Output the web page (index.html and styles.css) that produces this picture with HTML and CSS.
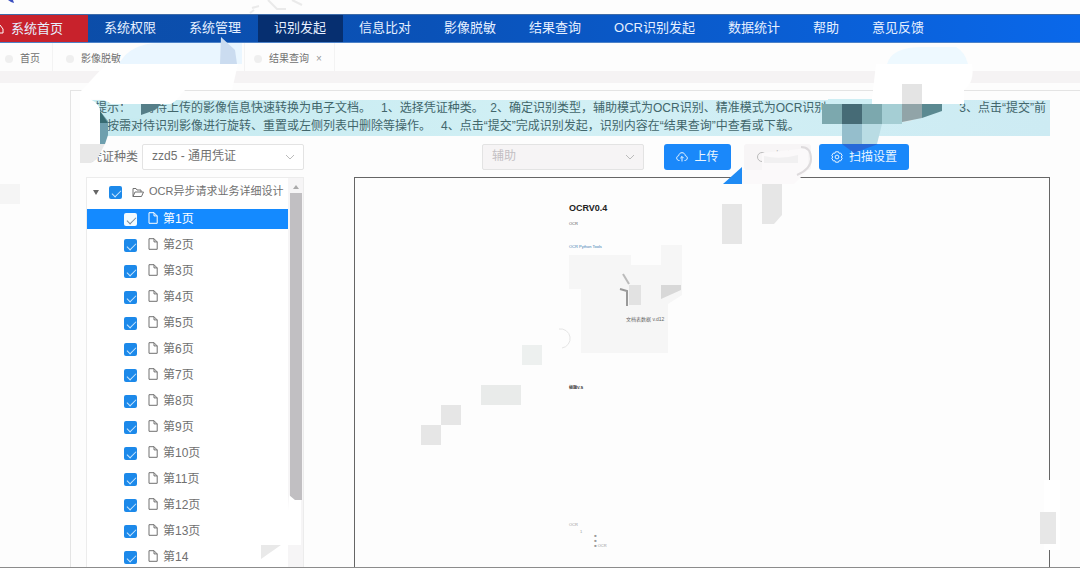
FILE: index.html
```html
<!DOCTYPE html>
<html lang="zh-CN">
<head>
<meta charset="utf-8">
<title>识别发起</title>
<link rel="stylesheet" href="styles.css">
</head>
<body>
<svg class="defs" width="0" height="0" aria-hidden="true">
  <symbol id="file" viewBox="0 0 10 12"><path d="M1 .7h5l3.2 3.2v7.4H1zM6 .7v3.2h3.2" fill="none" stroke="currentColor"/></symbol>
  <symbol id="chevron" viewBox="0 0 10 10"><path d="M1 3l4 4 4-4" fill="none" stroke="currentColor"/></symbol>
</svg>
<div class="page">
  <header class="brand">
    <svg class="brand-mark" width="16" height="4" viewBox="0 0 16 4"><path d="M8 0h5l1 3-3-1z" fill="#3b4fc0"/></svg>
  </header>
  <nav class="nav">
    <a class="nav-item home" href="#"><svg class="home-icon" width="5" height="12" viewBox="0 0 5 12"><path d="M0 2l3 4v4H0" fill="none" stroke="#fff"/></svg>系统首页</a>
    <a class="nav-item" href="#">系统权限</a>
    <a class="nav-item" href="#">系统管理</a>
    <a class="nav-item active" href="#">识别发起</a>
    <a class="nav-item" href="#">信息比对</a>
    <a class="nav-item" href="#">影像脱敏</a>
    <a class="nav-item" href="#">结果查询</a>
    <a class="nav-item" href="#">OCR识别发起</a>
    <a class="nav-item" href="#">数据统计</a>
    <a class="nav-item" href="#">帮助</a>
    <a class="nav-item" href="#">意见反馈</a>
  </nav>
  <div class="tabs">
    <a class="tab first" href="#"><i class="dot"></i>首页</a>
    <a class="tab wide" href="#"><i class="dot"></i>影像脱敏</a>
    <a class="tab" href="#"><i class="dot"></i>结果查询<span class="close">×</span></a>
  </div>
  <div class="band"></div>
  <main class="content">
    <div class="tip">
      <p class="tip-line">提示：可将待上传的影像信息快速转换为电子文档。   1、选择凭证种类。  2、确定识别类型，辅助模式为OCR识别、精准模式为OCR识别<span class="tip-end">3、点击“提交”前</span></p>
      <p class="tip-line">可按需对待识别影像进行旋转、重置或左侧列表中删除等操作。   4、点击“提交”完成识别发起，识别内容在“结果查询”中查看或下载。</p>
    </div>
    <form class="toolbar">
      <label class="label" for="kind">凭证种类</label>
      <span class="select"><select id="kind"><option>zzd5 - 通用凭证</option></select><svg class="arrow" width="10" height="10"><use href="#chevron"/></svg></span>
      <span class="select mode"><select aria-label="识别模式" disabled><option>辅助</option></select><svg class="arrow" width="10" height="10"><use href="#chevron"/></svg></span>
      <button class="btn upload" type="button"><svg width="12" height="12" viewBox="0 0 12 12" fill="none" stroke="currentColor"><path d="M3.5 9.5C1.500 9.500.7 8.300.7 7c0-1.200.9-2.200 2-2.300C3 2.700 4.300 1.700 6 1.700s3 1 3.300 3c1.100.1 2 1.100 2 2.300 0 1.300-.8 2.500-2.800 2.500M6 10.500V5.500M4.300 7.200L6 5.500l1.700 1.700"/></svg><span class="btn-text">上传</span></button>
      <button class="btn ghost" type="button" disabled><svg width="12" height="12" viewBox="0 0 12 12" fill="none" stroke="currentColor"><circle cx="6" cy="6" r="4.500"/></svg><span class="btn-text">扫描</span></button>
      <button class="btn setting" type="button"><svg width="12" height="12" viewBox="0 0 12 12" fill="none" stroke="currentColor"><path d="M4.500.8h3l.6 1.500 1.600-.2 1.500 2.600-1 1.300 1 1.300-1.500 2.600-1.600-.2-.6 1.500h-3l-.6-1.500-1.600.2L.8 7.300 1.800 6l-1-1.300 1.500-2.600 1.600.2z"/><circle cx="6" cy="6" r="1.900"/></svg><span class="btn-text">扫描设置</span></button>
    </form>
    <div class="work">
      <aside class="tree">
        <div class="tree-list">
          <div class="root"><span class="caret"></span><input class="check" type="checkbox" id="r" checked><svg width="12" height="11" viewBox="0 0 12 11" fill="none" stroke="currentColor"><path d="M1 9.500v-8h3l1 1.500h4v2M1 9.500L3 5h8.500L9.500 9.500z"/></svg><label for="r">OCR异步请求业务详细设计</label></div>
          <div class="node selected"><input class="check" type="checkbox" id="p1" checked><svg width="10" height="12"><use href="#file"/></svg><label for="p1">第1页</label></div>
          <div class="node"><input class="check" type="checkbox" id="p2" checked><svg width="10" height="12"><use href="#file"/></svg><label for="p2">第2页</label></div>
          <div class="node"><input class="check" type="checkbox" id="p3" checked><svg width="10" height="12"><use href="#file"/></svg><label for="p3">第3页</label></div>
          <div class="node"><input class="check" type="checkbox" id="p4" checked><svg width="10" height="12"><use href="#file"/></svg><label for="p4">第4页</label></div>
          <div class="node"><input class="check" type="checkbox" id="p5" checked><svg width="10" height="12"><use href="#file"/></svg><label for="p5">第5页</label></div>
          <div class="node"><input class="check" type="checkbox" id="p6" checked><svg width="10" height="12"><use href="#file"/></svg><label for="p6">第6页</label></div>
          <div class="node"><input class="check" type="checkbox" id="p7" checked><svg width="10" height="12"><use href="#file"/></svg><label for="p7">第7页</label></div>
          <div class="node"><input class="check" type="checkbox" id="p8" checked><svg width="10" height="12"><use href="#file"/></svg><label for="p8">第8页</label></div>
          <div class="node"><input class="check" type="checkbox" id="p9" checked><svg width="10" height="12"><use href="#file"/></svg><label for="p9">第9页</label></div>
          <div class="node"><input class="check" type="checkbox" id="p10" checked><svg width="10" height="12"><use href="#file"/></svg><label for="p10">第10页</label></div>
          <div class="node"><input class="check" type="checkbox" id="p11" checked><svg width="10" height="12"><use href="#file"/></svg><label for="p11">第11页</label></div>
          <div class="node"><input class="check" type="checkbox" id="p12" checked><svg width="10" height="12"><use href="#file"/></svg><label for="p12">第12页</label></div>
          <div class="node"><input class="check" type="checkbox" id="p13" checked><svg width="10" height="12"><use href="#file"/></svg><label for="p13">第13页</label></div>
          <div class="node"><input class="check" type="checkbox" id="p14" checked><svg width="10" height="12"><use href="#file"/></svg><label for="p14">第14</label></div>
        </div>
        <div class="scroll"><span class="scroll-up"></span><span class="thumb"></span></div>
      </aside>
      <article class="doc">
        <h1 class="doc-title">OCRV0.4</h1>
        <p class="doc-small">OCR</p>
        <p class="doc-link">OCR Python Tools</p>
        <svg class="figure" width="113" height="98" viewBox="0 0 113 98">
          <path d="M0 0h62v10h30v-10h21v40l-14 9v49H12V34H0z" fill="#f6f6f6"/>
          <path d="M92-10h21V2H92z" fill="#f6f6f6"/>
          <path d="M60 30h12v20H60z" fill="#e2e2e2"/><path d="M92 30h20v5l-20 9z" fill="#d8d8d8"/>
          <path d="M54 19l6 10" stroke="#bbb" stroke-width="2" fill="none"/><path d="M51 34l7 2v15" stroke="#999" stroke-width="2" fill="none"/>
          <path d="M-10 74A9 9 0 1 1-7 93" stroke="#e5e5e5" fill="none"/>
          <text class="figure-text" x="57" y="66">文档表数据 v.d12</text>
        </svg>
        <p class="doc-head">标题V.S</p>
        <p class="doc-foot">OCR</p>
        <div class="doc-list"><span>1</span><ul><li>■</li><li>■</li><li>■ OCR</li></ul></div>
      </article>
    </div>
  </main>
  <svg class="marks" width="1080" height="568" viewBox="0 0 1080 568" aria-hidden="true">
    <path d="M250 13l4-3M252 8l7-2M268 0l9 9 9 0M292 0l10 5" stroke="#dedede" stroke-width="2" fill="none" opacity=".6"/>
    <path d="M119 64Q130 43 160 43H242V64z" fill="#eaf6ff"/><path d="M221 37l14 13 2 14h-17z" fill="#cbdcf0"/>
    <path d="M106 64H238L232 90H185Q174 104 170 104H111Q104 99 98 99H80V92z" fill="#fff"/>
    <path d="M123 104h18v14h-18z" fill="#c8ebf1"/><path d="M141 104h20l-6 6-14 5z" fill="#557e88"/>
    <path d="M80 99h10q10 5 10 12v35H80z" fill="#fff"/><path d="M100 111l8 10v14l-3 9h-5z" fill="#6e9fae"/><path d="M100 111l8 12h-8z" fill="#376b72"/>
    <path d="M80 144h25l-8 15-6 4H80z" fill="#e8e8e8"/><path d="M0 184h20v20H0z" fill="#f5f5f5"/>
    <path d="M887 64q5-17 35-17h34q9 5 12 17z" fill="#eef9ff"/><path d="M876 64h96q3 18-8 26v14H828l4-5H872z" fill="#fff"/>
    <path d="M828 99h44v5h-44z" fill="#ceeef4"/>
    <path d="M822 104h60v20h-60z" fill="#7ca8ae"/><path d="M842 104h20v20h-20z" fill="#466b76"/><path d="M842 124h20v20h-20z" fill="#95becc"/><path d="M862 124h20l-5 20h-15z" fill="#b9dce4"/>
    <path d="M882 104h20v20h-20z" fill="#a5ced4"/><path d="M902 84h20v32l-12 5-8 1z" fill="#e4e4e4"/><path d="M902 104h20v14l-20 4z" fill="#91a4a8"/><path d="M922 104h20v7l-20 7z" fill="#5b8991"/>
    <path d="M842 144h36l-24 9z" fill="#2769d8"/>
    <path d="M742 167v17h-19z" fill="#1f8bf4"/><path d="M742 170h20V153l46-5v22l-14 14h-52z" fill="#fbf9fa"/><path d="M764 156q16 4 34-1v8h-34z" fill="#f1f0f1"/><path d="M801 147q10 0 10 12 0 10-14 16" stroke="#dedbdd" stroke-width="2" fill="none"/>
    <path d="M762 184h20v31l-8 9h-12zM722 204h20v40h-20z" fill="#e6e6e6"/>
    <path d="M522 345h20v20h-20z" fill="#edf0ef"/><path d="M481 385h40v20h-40z" fill="#e9ebea"/><path d="M441 405h20v20h-20zM421 425h20v20h-20z" fill="#e6e6e6"/>
    <path d="M289 495l6 5h6v45h-15z" fill="#fff"/><path d="M261 545h20l-20 14z" fill="#e9e9e9"/>
    <path d="M1044 480h16v70h-16z" fill="#fff"/><path d="M1040 512h16v32h-16z" fill="#e7e7e7"/>
  </svg>
</div>
</body>
</html>
```
FILE: styles.css
```css
* { box-sizing: border-box; }
body, p, h1, ul { margin: 0; padding: 0; }
body {
  font-family: "Liberation Sans", "Noto Sans CJK SC", sans-serif;
  font-size: 12px;
  color: #707070;
  background: #fdfdfd;
}
a { color: inherit; text-decoration: none; }
ul { list-style: none; }
.defs { position: absolute; }
.page {
  position: relative;
  display: flex;
  flex-direction: column;
  height: 100vh;
  overflow: hidden;
  border-bottom: 1px solid #8c8c8c;
}
.brand { flex: 0 0 14px; }
.brand-mark { display: block; }
.nav {
  display: flex;
  flex: 0 0 29px;
  border-top: 1px solid #3f6ca8;
  border-bottom: 1px solid #4d82c8;
  background: linear-gradient(90deg, #0c4ca5, #0a52b8 40%, #0a68ea);
  color: #e6f0ff;
  font-size: 13px;
  line-height: 26px;
  white-space: nowrap;
}
.nav-item { padding: 0 17px 0 16px; }
.home {
  display: flex;
  align-items: center;
  padding: 0 25px 0 0;
  background: #c8222c;
}
.home-icon { margin-right: 6px; }
.active { background: #062f70; }
.tabs {
  display: flex;
  flex: 0 0 27px;
  align-items: center;
  font-size: 10px;
  line-height: 24px;
}
.tab {
  display: flex;
  align-items: center;
  padding: 4px 12px 0 9px;
  border-right: 1px solid #f3f3f3;
}
.first { padding-left: 5px; }
.wide { width: 192px; padding-left: 13px; }
.dot {
  width: 8px;
  height: 8px;
  margin-right: 7px;
  border-radius: 4px;
  background: #efefef;
}
.close { margin-left: 7px; color: #999; }
.band { flex: 0 0 12px; background: #f5f3f4; }
.content {
  display: flex;
  flex: 1;
  flex-direction: column;
  min-height: 0;
  margin: 7px 0 0 70px;
  padding: 9px 30px 0 15px;
  border-top: 1px solid #e4e4e4;
  border-left: 1px solid #e4e4e4;
}
.tip {
  padding: 0 4px 0 9px;
  background: linear-gradient(90deg, #c5eaf0, #d2f0f5 50%, #cdebf3);
  color: #42666b;
  white-space: nowrap;
}
.tip-line { display: flex; height: 18px; line-height: 17px; white-space: pre; }
.tip-end { margin-left: auto; }
.toolbar { display: flex; align-items: center; height: 26px; margin-top: 8px; }
.label { width: 52px; margin-left: 4px; padding-bottom: 3px; }
.select { position: relative; flex: 0 0 162px; color: #707070; }
.select select {
  width: 100%;
  height: 26px;
  padding: 0 9px 3px;
  border: 1px solid #e3e3e3;
  border-radius: 2px;
  background: #fff;
  color: inherit;
  font: inherit;
  appearance: none;
}
.arrow { position: absolute; top: 8px; right: 9px; color: #bbb; }
.mode { margin-left: 178px; color: #c3bfc3; }
.mode select { background: #f6f4f5; opacity: 1; }
.btn {
  display: flex;
  align-items: center;
  justify-content: center;
  gap: 6px;
  width: 67px;
  height: 26px;
  padding: 0;
  border: 0;
  border-radius: 3px;
  background: #1a88fa;
  color: #eaf5ff;
  font: inherit;
}
.btn-text { padding-bottom: 3px; }
.upload { margin-left: 20px; }
.ghost { margin-left: 13px; background: #f7f5f6; color: #bbb; }
.setting { width: 90px; margin-left: 8px; }
.work { display: flex; flex: 1; gap: 50px; min-height: 0; margin-top: 7px; }
.tree {
  display: flex;
  flex: 0 0 218px;
  overflow: hidden;
  border: 1px solid #ececec;
  border-bottom: 0;
  background: #fff;
}
.tree-list { flex: 1; min-width: 0; overflow: hidden; white-space: nowrap; }
.root, .node { display: flex; align-items: center; height: 20px; }
.root { gap: 5px; margin: 4px 0 7px; padding-left: 6px; font-size: 11px; }
.root .check { margin: 0 5px; }
.root svg { flex: 0 0 12px; }
.root label, .node label { padding-bottom: 4px; }
.caret { border: 3px solid transparent; border-top: 5px solid #666; border-bottom: 0; }
.node { margin-bottom: 6px; padding-left: 37px; }
.node svg { margin: 0 5px 2px 11px; }
.selected { background: #148aff; color: #fff; }
.check {
  flex: 0 0 13px;
  width: 13px;
  height: 13px;
  margin: 0;
  border-radius: 2px;
  background: #1c89ea;
  appearance: none;
}
.check::before {
  content: "";
  display: block;
  width: 8px;
  height: 4px;
  margin: 4px 0 0 3px;
  border: solid #c9e7ff;
  border-width: 0 0 1px 1px;
  transform: rotate(-45deg);
}
.selected .check { background: #f2faff; }
.selected .check::before { border-color: #789; }
.scroll {
  display: flex;
  flex: 0 0 15px;
  flex-direction: column;
  align-items: center;
  background: #f6f5f6;
}
.scroll-up { margin: 7px 0 4px; border: 3px solid transparent; border-bottom: 4px solid #aaa; border-top: 0; }
.thumb { width: 12px; height: 79%; background: #c1bfc2; }
.doc {
  flex: 1;
  min-width: 0;
  overflow: hidden;
  padding: 24px 0 0 214px;
  border: 1px solid #666;
  border-bottom: 0;
}
.doc-title { color: #222; font-size: 9px; line-height: 12px; }
.doc-small, .doc-link, .doc-head, .doc-foot { font-size: 4px; line-height: 8px; }
.doc-small { margin-top: 6px; color: #555; }
.doc-link { margin-top: 15px; color: #3a7cb0; }
.figure { display: block; margin-top: 4px; overflow: visible; }
.figure-text { fill: #666; font-size: 5px; }
.doc-head { margin-top: 31px; color: #333; font-weight: bold; }
.doc-foot { margin-top: 129px; color: #999; }
.doc-list { display: flex; gap: 12px; padding-left: 11px; color: #999; font-size: 4px; line-height: 5px; }
.doc-list ul { padding-top: 4px; }
.marks { position: absolute; top: 0; left: 0; pointer-events: none; }
```
